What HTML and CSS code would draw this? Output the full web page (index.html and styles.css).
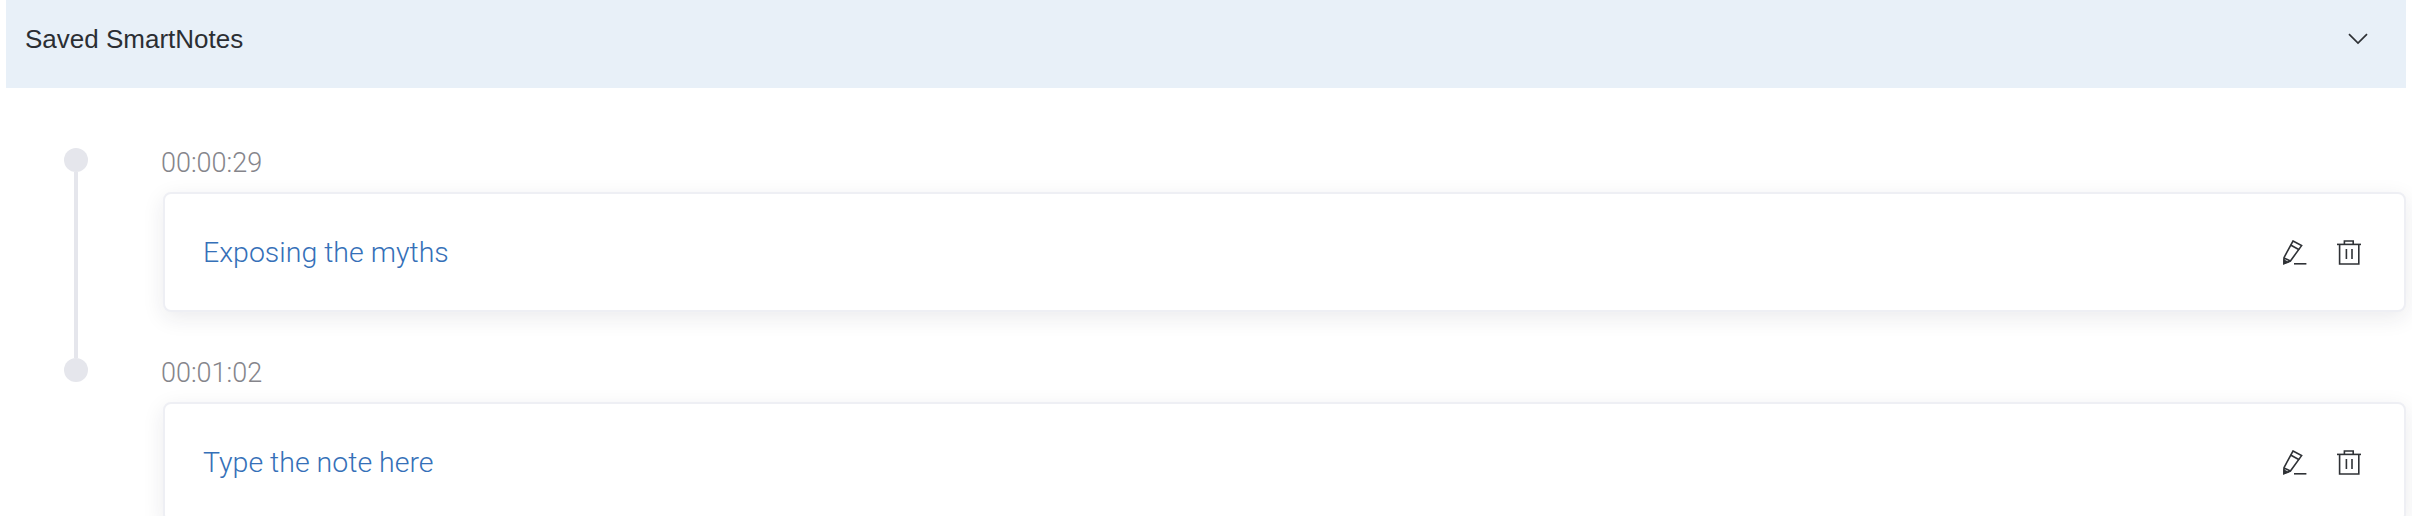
FILE: index.html
```html
<!DOCTYPE html>
<html lang="en">
<head>
    <meta charset="UTF-8">
    <meta name="viewport" content="width=device-width, initial-scale=1.0">
    <title>Saved SmartNotes</title>
    <link rel="stylesheet" href="styles.css">
</head>
<body>
    <div class="panel">
        <div class="panel-header">
            <span class="panel-title">Saved SmartNotes</span>
            <svg class="chevron" width="20" height="12" viewBox="0 0 20 12" fill="none" stroke="#2f3236" stroke-width="1.7">
                <path d="M1 1.2 L10 10 L19 1.2"/>
            </svg>
        </div>
        <div class="timeline">
            <div class="note-row">
                <div class="marker"><span class="dot"></span><span class="line"></span></div>
                <div class="note">
                    <div class="note-time">00:00:29</div>
                    <div class="note-card">
                        <span class="note-text">Exposing the myths</span>
                        <div class="note-actions">
                            <svg width="24" height="25" viewBox="0 0 24 25" fill="none" stroke="#2f3236" stroke-width="1.6">
                                <path d="M10 1 L18.6 5.6 L7.4 21 L1 23.6 L1 17.6 Z"/>
                                <path d="M7.6 5 L16.2 9.8"/>
                                <path d="M1 18 L7.4 21"/>
                                <path d="M1 23.6 L1 20.4 L4.4 22.2 Z" fill="#2f3236"/>
                                <path d="M11 23.8 H23.4"/>
                            </svg>
                            <svg width="24" height="25" viewBox="0 0 24 25" fill="none" stroke="#2f3236" stroke-width="1.6">
                                <path d="M0 4.4 H24"/>
                                <path d="M7.4 4.4 V1 H16.2 V4.4"/>
                                <path d="M2.6 4.4 V24 H21.8 V4.4"/>
                                <path d="M9.4 9 V19 M15 9 V19"/>
                            </svg>
                        </div>
                    </div>
                </div>
            </div>
            <div class="note-row">
                <div class="marker"><span class="dot"></span></div>
                <div class="note">
                    <div class="note-time">00:01:02</div>
                    <div class="note-card">
                        <span class="note-text">Type the note here</span>
                        <div class="note-actions">
                            <svg width="24" height="25" viewBox="0 0 24 25" fill="none" stroke="#2f3236" stroke-width="1.6">
                                <path d="M10 1 L18.6 5.6 L7.4 21 L1 23.6 L1 17.6 Z"/>
                                <path d="M7.6 5 L16.2 9.8"/>
                                <path d="M1 18 L7.4 21"/>
                                <path d="M1 23.6 L1 20.4 L4.4 22.2 Z" fill="#2f3236"/>
                                <path d="M11 23.8 H23.4"/>
                            </svg>
                            <svg width="24" height="25" viewBox="0 0 24 25" fill="none" stroke="#2f3236" stroke-width="1.6">
                                <path d="M0 4.4 H24"/>
                                <path d="M7.4 4.4 V1 H16.2 V4.4"/>
                                <path d="M2.6 4.4 V24 H21.8 V4.4"/>
                                <path d="M9.4 9 V19 M15 9 V19"/>
                            </svg>
                        </div>
                    </div>
                </div>
            </div>
        </div>
    </div>
</body>
</html>
```

FILE: styles.css
```css
html, body {
    height: 100%;
    overflow: hidden;
}
body {
    font-family: "Liberation Sans", Arial, sans-serif;
    background-color: #fff;
    margin: 0;
    padding: 0;
}
.panel {
    margin: 0 6px;
}
.panel-header {
    height: 88px;
    padding: 0 38px 0 19px;
    display: flex;
    align-items: center;
    justify-content: space-between;
    background-color: #e8f0f8;
}
.panel-title {
    font-size: 26px;
    color: #2b2e33;
    position: relative;
    top: -5px;
}
.chevron {
    margin-top: -10px;
}
.timeline {
    padding-top: 60px;
}
.note-row {
    display: flex;
    height: 210px;
}
.marker {
    width: 155px;
    padding-left: 58px;
    box-sizing: border-box;
    display: flex;
    flex-direction: column;
    align-items: flex-start;
    flex-shrink: 0;
}
.dot {
    width: 24px;
    height: 24px;
    border-radius: 50%;
    background-color: #e5e6ec;
    flex-shrink: 0;
}
.line {
    width: 4px;
    flex: 1;
    margin-left: 10px;
    background-color: #e5e6ec;
}
.note {
    flex: 1;
    min-width: 0;
}
.note-time {
    font-family: Roboto, "Liberation Sans", sans-serif;
    font-weight: 300;
    font-size: 27px;
    line-height: 30px;
    height: 44px;
    color: #85858b;
}
.note-card {
    box-sizing: border-box;
    margin-left: 2px;
    height: 120px;
    padding: 0 43px 0 38px;
    display: flex;
    align-items: center;
    justify-content: space-between;
    background-color: #fff;
    border: 2px solid #eeeff4;
    border-radius: 8px;
    box-shadow: 0 6px 22px rgba(30, 30, 60, 0.09);
}
.note-text {
    font-family: Roboto, "Liberation Sans", sans-serif;
    font-weight: 300;
    font-size: 28.5px;
    color: #3570b8;
}
.note-actions {
    display: flex;
    gap: 30px;
    align-items: center;
}
```
